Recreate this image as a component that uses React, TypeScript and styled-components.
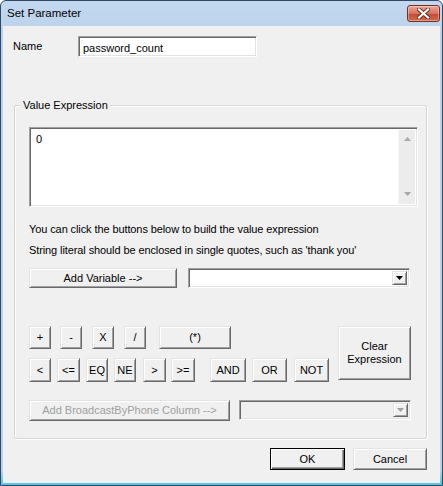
import React from "react";
import styled, { createGlobalStyle } from "styled-components";

type BtnProps = {
  $w: number;
  $h?: number;
  $ml?: number;
  $default?: boolean;
};

type ComboProps = {
  $w: number;
  $ml?: number;
  $disabled?: boolean;
};

const row1 = [
  { label: "+", w: 22, ml: 0 },
  { label: "-", w: 22, ml: 9 },
  { label: "X", w: 22, ml: 10 },
  { label: "/", w: 22, ml: 10 },
  { label: "(*)", w: 72, ml: 13 },
];

const row2 = [
  { label: "<", w: 22, ml: 0 },
  { label: "<=", w: 23, ml: 6 },
  { label: "EQ", w: 22, ml: 6 },
  { label: "NE", w: 22, ml: 6 },
  { label: ">", w: 23, ml: 7 },
  { label: ">=", w: 24, ml: 5 },
  { label: "AND", w: 36, ml: 15 },
  { label: "OR", w: 35, ml: 6 },
  { label: "NOT", w: 35, ml: 7 },
];

const ArrowDown = ({ color }: { color: string }) => (
  <svg width="7" height="4" viewBox="0 0 7 4">
    <path d="M0 0 H7 L3.5 4 Z" fill={color} />
  </svg>
);

const App = () => {
  return (
    <>
      <GlobalStyle />
      <Window>
        <TitleBar>
          <Title>Set Parameter</Title>
          <CloseBtn>
            <svg width="13" height="11" viewBox="0 0 13 11">
              <path
                d="M2 1.5 L11 9.5 M11 1.5 L2 9.5"
                stroke="#6a2a20"
                strokeWidth="4"
                strokeLinecap="square"
              />
              <path
                d="M2 1.5 L11 9.5 M11 1.5 L2 9.5"
                stroke="#ffffff"
                strokeWidth="2.2"
                strokeLinecap="square"
              />
            </svg>
          </CloseBtn>
        </TitleBar>
        <Body>
          <NameRow>
            <NameLabel>Name</NameLabel>
            <NameInput defaultValue="password_count" />
          </NameRow>

          <GroupBox>
            <Caption>Value Expression</Caption>
            <ExprBox>
              <ExprText defaultValue="0" />
              <ScrollBar>
                <svg width="7" height="4" viewBox="0 0 7 4">
                  <path d="M0 4 H7 L3.5 0 Z" fill="#a8a8a8" />
                </svg>
                <ArrowDown color="#a8a8a8" />
              </ScrollBar>
            </ExprBox>

            <Hints>
              <HintLine>
                You can click the buttons below to build the value expression
              </HintLine>
              <HintLine>
                String literal should be enclosed in single quotes, such as
                'thank you'
              </HintLine>
            </Hints>

            <ControlRow $mt={7}>
              <Button $w={148} $h={20}>
                Add Variable --&gt;
              </Button>
              <Combo $w={222} $ml={11}>
                <ComboValue />
                <ComboArrow>
                  <ArrowDown color="#000" />
                </ComboArrow>
              </Combo>
            </ControlRow>

            <Operators>
              <OpRows>
                <OpRow>
                  {row1.map((b) => (
                    <Button key={b.label} $w={b.w} $h={23} $ml={b.ml}>
                      {b.label}
                    </Button>
                  ))}
                </OpRow>
                <OpRow>
                  {row2.map((b) => (
                    <Button key={b.label} $w={b.w} $h={24} $ml={b.ml}>
                      {b.label}
                    </Button>
                  ))}
                </OpRow>
              </OpRows>
              <Button $w={73} $h={54} $ml={9}>
                Clear
                <br />
                Expression
              </Button>
            </Operators>

            <ControlRow $mt={18}>
              <Button $w={201} $h={21} disabled>
                Add BroadcastByPhone Column --&gt;
              </Button>
              <Combo $w={172} $ml={9} $disabled>
                <ComboValue />
                <ComboArrow>
                  <ArrowDown color="#a0a0a0" />
                </ComboArrow>
              </Combo>
            </ControlRow>
          </GroupBox>

          <Footer>
            <Button $w={75} $h={22} $default>
              OK
            </Button>
            <Button $w={74} $h={22} $ml={8}>
              Cancel
            </Button>
          </Footer>
        </Body>
      </Window>
    </>
  );
};

export default App;

const GlobalStyle = createGlobalStyle`
  html, body {
    margin: 0;
    padding: 0;
    background: #ffffff;
  }
  body {
    font-family: "Liberation Sans", Arial, sans-serif;
    font-size: 11px;
    color: #000;
  }
`;

const Window = styled.div`
  width: 443px;
  height: 486px;
  box-sizing: border-box;
  display: flex;
  flex-direction: column;
  border: 1px solid #2f4a66;
  border-radius: 6px 6px 0 0;
  padding: 0 2px 2px 2px;
  background: linear-gradient(#c3d8f0, #b9d1ea 40px, #b9d1ea 470px, #4fc3e6);
`;

const TitleBar = styled.div`
  height: 25px;
  display: flex;
  align-items: flex-start;
  justify-content: space-between;
`;

const Title = styled.div`
  padding: 5px 0 0 4px;
  font-size: 11.5px;
  line-height: 15px;
  color: #000;
`;

const CloseBtn = styled.div`
  width: 33px;
  height: 17px;
  margin-top: 4px;
  box-sizing: border-box;
  display: flex;
  align-items: center;
  justify-content: center;
  border: 1px solid #7a2d22;
  border-radius: 3px;
  background: linear-gradient(#e8a999, #d7705e 50%, #c24a36 51%, #cf6a4f);
  box-shadow: inset 0 0 0 1px rgba(255, 255, 255, 0.35);
`;

const Body = styled.div`
  flex: 1;
  background: #f0f0f0;
  padding: 10px 0 0 10px;
  display: flex;
  flex-direction: column;
`;

const NameRow = styled.div`
  display: flex;
  align-items: flex-start;
`;

const NameLabel = styled.div`
  width: 65px;
  padding-top: 3px;
  line-height: 14px;
`;

const sunken = `
  box-sizing: border-box;
  border: 1px solid;
  border-color: #a0a0a0 #ffffff #ffffff #a0a0a0;
  box-shadow: inset 1px 1px 0 #696969, inset -1px -1px 0 #e3e3e3;
`;

const NameInput = styled.input`
  ${sunken}
  width: 179px;
  height: 21px;
  padding: 2px 4px 0 4px;
  margin: 0;
  font-family: inherit;
  font-size: 11px;
  background: #fff;
  outline: none;
`;

const GroupBox = styled.div`
  position: relative;
  width: 413px;
  box-sizing: border-box;
  margin: 48px 0 0 1px;
  padding: 21px 0 17px 14px;
  border: 1px solid #d5d5d5;
  border-radius: 2px;
  box-shadow: inset 1px 1px 0 #fff, 1px 1px 0 #fff;
`;

const Caption = styled.div`
  position: absolute;
  top: -8px;
  left: 6px;
  padding: 0 2px;
  line-height: 14px;
  font-size: 11px;
  background: #f0f0f0;
`;

const ExprBox = styled.div`
  ${sunken}
  width: 389px;
  height: 80px;
  display: flex;
  background: #fff;
  padding: 2px;
`;

const ExprText = styled.textarea`
  flex: 1;
  border: none;
  outline: none;
  resize: none;
  margin: 0;
  padding: 2px 4px;
  font-family: inherit;
  font-size: 11px;
  line-height: 14px;
  background: transparent;
`;

const ScrollBar = styled.div`
  width: 17px;
  display: flex;
  flex-direction: column;
  align-items: center;
  justify-content: space-between;
  padding: 7px 0 8px 0;
  box-sizing: border-box;
  background: #ececec;
  border-left: 1px solid #f6f6f6;
`;

const Hints = styled.div`
  margin-top: 12px;
`;

const HintLine = styled.div`
  line-height: 21px;
  letter-spacing: -0.1px;
  white-space: nowrap;
`;

const ControlRow = styled.div<{ $mt: number }>`
  display: flex;
  align-items: flex-start;
  margin-top: ${(p) => p.$mt}px;
`;

const Button = styled.button<BtnProps>`
  width: ${(p) => p.$w}px;
  height: ${(p) => p.$h ?? 23}px;
  margin: 0 0 0 ${(p) => p.$ml ?? 0}px;
  padding: 0;
  box-sizing: border-box;
  font-family: inherit;
  font-size: 11px;
  line-height: 13px;
  color: #000;
  background: #f0f0f0;
  border: 1px solid;
  border-color: ${(p) =>
    p.$default ? "#000" : "#e3e3e3 #696969 #696969 #e3e3e3"};
  box-shadow: ${(p) =>
    p.$default
      ? "inset 1px 1px 0 #fff, inset -1px -1px 0 #696969, inset -2px -2px 0 #a0a0a0"
      : "inset 1px 1px 0 #fff, inset -1px -1px 0 #a0a0a0"};
  white-space: nowrap;

  &:disabled {
    color: #a0a0a0;
  }
`;

const Combo = styled.div<ComboProps>`
  ${sunken}
  width: ${(p) => p.$w}px;
  height: 20px;
  margin-left: ${(p) => p.$ml ?? 0}px;
  padding: 2px;
  display: flex;
  background: ${(p) => (p.$disabled ? "#f0f0f0" : "#fff")};
`;

const ComboValue = styled.div`
  flex: 1;
`;

const ComboArrow = styled.div`
  width: 15px;
  box-sizing: border-box;
  display: flex;
  align-items: center;
  justify-content: center;
  background: #f0f0f0;
  border: 1px solid;
  border-color: #e3e3e3 #696969 #696969 #e3e3e3;
  box-shadow: inset 1px 1px 0 #fff, inset -1px -1px 0 #a0a0a0;
`;

const Operators = styled.div`
  display: flex;
  align-items: flex-start;
  margin-top: 38px;
`;

const OpRows = styled.div`
  display: flex;
  flex-direction: column;
  gap: 9px;
`;

const OpRow = styled.div`
  display: flex;
`;

const Footer = styled.div`
  display: flex;
  justify-content: flex-end;
  margin-top: 9px;
  padding-right: 13px;
`;
